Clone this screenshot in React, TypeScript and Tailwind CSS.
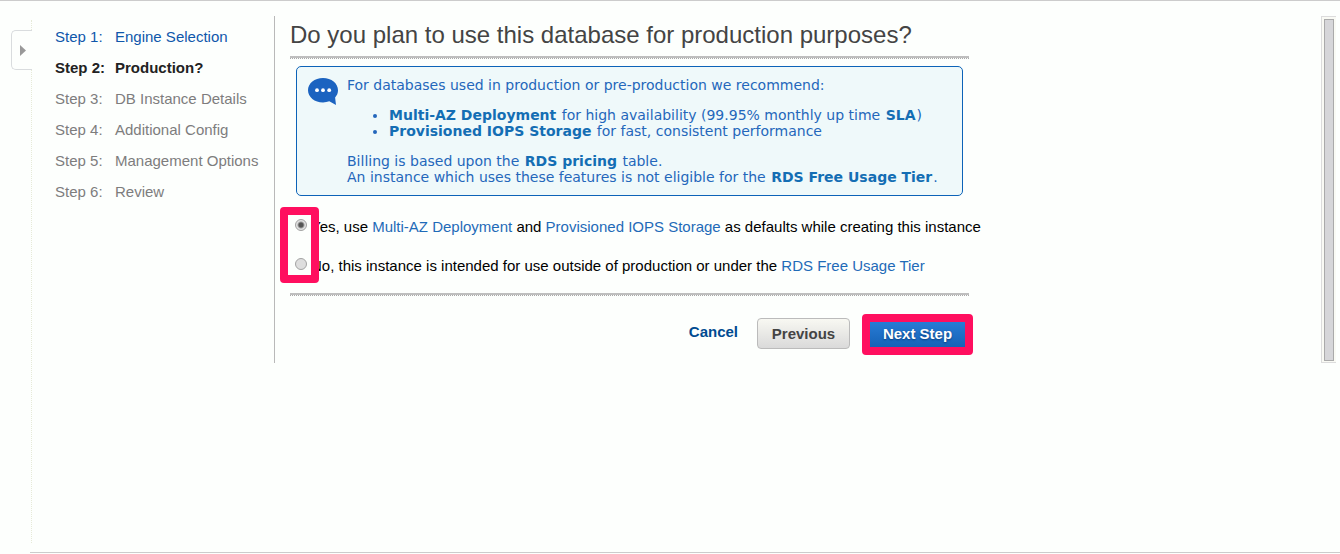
import React, { useState } from 'react';

const steps = [
  { id: 1, name: 'Engine Selection' },
  { id: 2, name: 'Production?' },
  { id: 3, name: 'DB Instance Details' },
  { id: 4, name: 'Additional Config' },
  { id: 5, name: 'Management Options' },
  { id: 6, name: 'Review' },
];

const CURRENT_STEP = 2;

function StepItem({ id, name }: { id: number; name: string }) {
  const label = (
    <>
      <span className="w-[60px] shrink-0">Step {id}:</span>
      <span>{name}</span>
    </>
  );

  if (id < CURRENT_STEP) {
    return <a href="#" className="flex text-[#0f57ab]">{label}</a>;
  }
  if (id === CURRENT_STEP) {
    return <span aria-current="step" className="flex font-bold text-[#222]">{label}</span>;
  }
  return <span className="flex text-[#7d7d7d]">{label}</span>;
}

function Rule() {
  return (
    <div>
      <div className="h-[2px] bg-[#bebebe]" />
      <div className="border-t border-dotted border-[#aaa]" />
    </div>
  );
}

function SpeechIcon() {
  return (
    <svg width="30" height="28" viewBox="0 0 30 28" aria-hidden="true" className="mt-[1px] shrink-0">
      <path
        d="M15 0C6.6 0 0 5.4 0 12.2s6.6 12.2 15 12.2c2.3 0 4.4-.4 6.3-1.1L28 27l-.9-7.6C29 17.4 30 15 30 12.2 30 5.4 23.4 0 15 0z"
        fill="#1b63c0"
      />
      <circle cx="9" cy="12.2" r="1.9" fill="#fff" />
      <circle cx="15" cy="12.2" r="1.9" fill="#fff" />
      <circle cx="21.2" cy="12.2" r="1.9" fill="#fff" />
    </svg>
  );
}

export default function App() {
  const [production, setProduction] = useState('yes');

  const radioCls = 'appearance-none mt-[1px] w-3 h-3 shrink-0 rounded-full border border-[#a3a3a3] bg-[#dedede] checked:bg-[radial-gradient(circle,#555_0_2px,#e2e2e2_4px)]';
  const boxLinkCls = 'mx-[1px] font-bold text-[#146eb4]';
  const linkCls = 'text-[#1f6bb8]';

  return (
    <div className="flex min-h-screen flex-col border-t border-[#ccc] bg-[#fdfffd] font-['Liberation_Sans',Arial,sans-serif] text-[15px] leading-[17px] text-black">
      <div className="flex flex-1">
        <aside className="flex w-8 shrink-0 flex-col items-end pt-[19px] pb-[9px]">
          <div className="h-[10px] border-r border-dotted border-[#e6ead8]" />
          <button aria-label="Expand panel" className="flex h-10 w-[21px] items-center rounded-l-[5px] border border-r-0 border-[#d9dcde] pl-2">
            <svg width="6" height="11" viewBox="0 0 6 11"><path d="M0 0l6 5.5L0 11z" fill="#999" /></svg>
          </button>
          <div className="flex-1 border-r border-dotted border-[#e6ead8]" />
        </aside>

        <div className="mt-[15px] mr-1 flex flex-1 self-start">
          <nav className="w-[243px] shrink-0 border-r border-[#b9b9b9] pt-3 pl-[23px]">
            <ol className="space-y-[14px]">
              {steps.map((s) => <li key={s.id}><StepItem id={s.id} name={s.name} /></li>)}
            </ol>
          </nav>

          <main className="ml-[15px] w-[679px] pb-[14px]">
            <h1 className="pt-[5px] pb-[7px] text-[24px] leading-7 text-[#444]">Do you plan to use this database for production purposes?</h1>
            <Rule />

            <section className="mx-[6px] mt-[7px] flex gap-[9px] rounded-[5px] border border-[#0d63b8] bg-[#eff9fa] py-[10px] pl-[11px] font-['DejaVu_Sans',Verdana,sans-serif] text-[14px] leading-4 text-[#2467bb]">
              <SpeechIcon />
              <div className="space-y-[14px] whitespace-nowrap">
                <p>For databases used in production or pre-production we recommend:</p>
                <ul className="list-disc pl-[41px]">
                  <li><a href="#" className={boxLinkCls}>Multi-AZ Deployment</a> for high availability (99.95% monthly up time <a href="#" className={boxLinkCls}>SLA</a>)</li>
                  <li><a href="#" className={boxLinkCls}>Provisioned IOPS Storage</a> for fast, consistent performance</li>
                </ul>
                <p>
                  Billing is based upon the <a href="#" className={boxLinkCls}>RDS pricing</a> table.<br />
                  An instance which uses these features is not eligible for the <a href="#" className={boxLinkCls}>RDS Free Usage Tier</a>.
                </p>
              </div>
            </section>

            <div className="relative mt-[22px] mb-[19px] flex flex-col gap-[22px] pl-[5px] whitespace-nowrap">
              <div className="flex gap-1">
                <input type="radio" id="prod-yes" name="production" className={radioCls}
                  checked={production === 'yes'} onChange={() => setProduction('yes')} />
                <label htmlFor="prod-yes">
                  Yes, use <a href="#" className={linkCls}>Multi-AZ Deployment</a> and <a href="#" className={linkCls}>Provisioned IOPS Storage</a> as defaults while creating this instance
                </label>
              </div>
              <div className="flex gap-1">
                <input type="radio" id="prod-no" name="production" className={radioCls}
                  checked={production === 'no'} onChange={() => setProduction('no')} />
                <label htmlFor="prod-no">
                  No, this instance is intended for use outside of production or under the <a href="#" className={linkCls}>RDS Free Usage Tier</a>
                </label>
              </div>
              <div className="pointer-events-none absolute -top-[11px] -left-[10px] h-[76px] w-[39px] rounded-[4px] border-8 border-[#ff0f5f]" />
            </div>
            <Rule />

            <div className="mt-[22px] flex items-start justify-end font-bold">
              <button className="mt-[5px] mr-[19px] text-[#004b91]">Cancel</button>
              <button className="mr-4 h-[31px] w-[93px] rounded-[4px] border border-[#bbb] bg-linear-to-b from-[#f8f8f2] to-[#dadada] text-[#444]">Previous</button>
              <div className="relative">
                <button className="h-[31px] w-[103px] bg-linear-to-b from-[#2a80da] to-[#1460b4] text-white text-shadow-[0_1px_2px_#0a3f7c]">Next Step</button>
                <div className="pointer-events-none absolute -inset-x-1 -top-1 -bottom-[6px] rounded-[4px] border-8 border-[#ff0f5f]" />
              </div>
            </div>
          </main>

          <div className="ml-auto w-[15px] shrink-0 border border-r-0 border-[#dcdcdc] bg-[#f9faf4] px-[2px] pt-[2px] pb-[1px]">
            <div className="h-full border border-[#aaa] bg-[#d6d6d9]" />
          </div>
        </div>
      </div>
      <footer className="ml-[30px] h-[2px] border-t border-[#ccc]" />
    </div>
  );
}
